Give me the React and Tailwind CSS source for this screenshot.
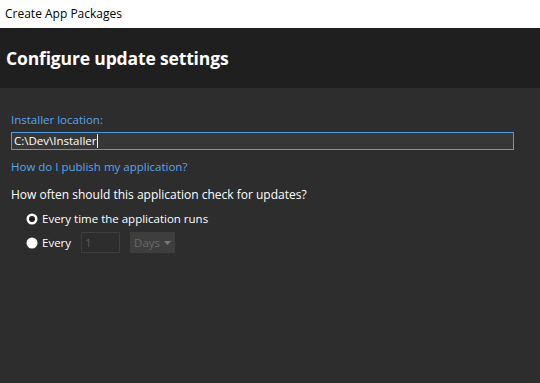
export default function App() {
  const f = { fontFamily: '"Open Sans", "Noto Sans", sans-serif' };
  return (
    <div className="w-[540px] h-[383px] flex flex-col bg-[#2d2d2d] overflow-hidden" style={f}>
      <div className="h-[28px] bg-white flex items-center pl-[5px] text-[12px] text-black">
        Create App Packages
      </div>
      <div className="h-[60px] bg-[#1f1f1f] flex items-center pl-[6px] pt-[1px]">
        <span className="text-[17.5px] font-bold text-white tracking-[-0.15px]">Configure update settings</span>
      </div>
      <div className="flex flex-col pl-[11px] pr-[26px] text-[11.5px]">
        <div className="mt-[24px] h-[16px] leading-[16px] text-[#5aa5ec]">Installer location:</div>
        <div className="mt-[4px] h-[18px] border border-[#4e9de6] bg-[#373737] flex items-center pl-[2px] text-white leading-[16px]">
          <span>C:\Dev\Installer</span>
          <span className="w-[1px] h-[14px] bg-white ml-[1px]" />
        </div>
        <div className="mt-[9px] h-[16px] leading-[16px] text-[#5aa5ec]">How do I publish my application?</div>
        <div className="mt-[12px] h-[16px] leading-[16px] text-white text-[12px]">How often should this application check for updates?</div>
        <div className="mt-[8px] flex items-center h-[16px] pl-[15px] text-white">
          <svg width="12" height="12" viewBox="0 0 12 12" className="mr-[4px]">
            <circle cx="6" cy="6" r="5.5" fill="#ffffff" />
            <circle cx="6" cy="6" r="3" fill="#1f1f1f" />
          </svg>
          <span>Every time the application runs</span>
        </div>
        <div className="mt-[5px] flex items-center h-[21px] pl-[15px] text-white">
          <svg width="12" height="12" viewBox="0 0 12 12" className="mr-[4px]">
            <circle cx="6" cy="6" r="5.5" fill="#ffffff" />
          </svg>
          <span>Every</span>
          <div className="ml-[10px] w-[39px] h-[21px] border border-[#3e3e3e] flex items-center pl-[3px] text-[#5c5c5c]">1</div>
          <div className="ml-[10px] w-[45px] h-[21px] bg-[#3e3e3e] flex items-center pl-[4px] text-[#6a6a6a]">
            <span>Days</span>
            <svg width="7" height="4" viewBox="0 0 7 4" className="ml-[4px]">
              <path d="M0 0 L7 0 L3.5 4 Z" fill="#7a7a7a" />
            </svg>
          </div>
        </div>
      </div>
    </div>
  );
}
